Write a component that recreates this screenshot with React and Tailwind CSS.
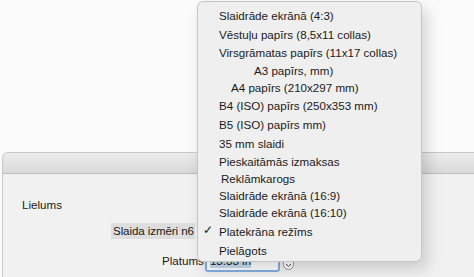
import React from 'react';

const items = [
  { label: 'Slaidrāde ekrānā (4:3)', h: 'h-[19px]', pl: 'pl-[21px]' },
  { label: 'Vēstuļu papīrs (8,5x11 collas)', h: 'h-[19px]', pl: 'pl-[21px]' },
  { label: 'Virsgrāmatas papīrs (11x17 collas)', h: 'h-[18px]', pl: 'pl-[21px]' },
  { label: 'A3 papīrs, mm)', h: 'h-[17px]', pl: 'pl-[56px]' },
  { label: 'A4 papīrs (210x297 mm)', h: 'h-[18px]', pl: 'pl-[33px]' },
  { label: 'B4 (ISO) papīrs (250x353 mm)', h: 'h-[18px]', pl: 'pl-[21px]' },
  { label: 'B5 (ISO) papīrs mm)', h: 'h-[19px]', pl: 'pl-[21px]' },
  { label: '35 mm slaidi', h: 'h-[19px]', pl: 'pl-[21px]' },
  { label: 'Pieskaitāmās izmaksas', h: 'h-[17px]', pl: 'pl-[21px]' },
  { label: 'Reklāmkarogs', h: 'h-[17px]', pl: 'pl-[23px]' },
  { label: 'Slaidrāde ekrānā (16:9)', h: 'h-[17px]', pl: 'pl-[21px]' },
  { label: 'Slaidrāde ekrānā (16:10)', h: 'h-[18px]', pl: 'pl-[21px]' },
  { label: 'Platekrāna režīms', h: 'h-[19px]', pl: 'pl-[21px]', checked: true },
  { label: 'Pielāgots', h: 'h-[19px]', pl: 'pl-[21px]' },
];

export default function App() {
  return (
    <div
      className="relative w-[474px] h-[277px] overflow-hidden bg-[#fbfbfb] text-[11.6px] text-[#1a1a1a]"
      style={{ fontFamily: '"Liberation Sans", Arial, sans-serif' }}
    >
      <div className="h-[152px]" />

      {/* Dialog */}
      <div className="ml-[2px] h-[125px] rounded-tl-[6px] border-t border-l border-[#c8c8c8] bg-[#f1f1f1] overflow-hidden">
        <div className="h-[21px] bg-gradient-to-b from-[#ececec] to-[#d9d9d9] border-b border-[#bdbdbd]" />
        <div className="pl-[19px] pt-[23px] leading-[16px]">Lielums</div>
        <div className="mt-[10px] flex items-center h-[16px]">
          <span className="ml-[108px] bg-[#dedede] pl-[2px] pr-[1px] leading-[16px] tracking-[-0.1px]">Slaida izmēri n6</span>
        </div>
        <div className="mt-[10px] flex items-center h-[23px]">
          <span className="ml-[159px] leading-[16px]">Platums</span>
          <div className="ml-[1px] w-[75px] h-[23px] rounded-[3px] border-2 border-[#84aee0] bg-white px-[3px] flex items-center">
            <span className="bg-[#c9dcf2] leading-[15px]">13.33 in</span>
          </div>
          <div className="ml-[3px] mt-[2px] w-[11px] h-[16px] rounded-full border border-[#9a9a9a] bg-white flex items-end justify-center pb-[1px]">
            <svg width="7" height="5" viewBox="0 0 7 5">
              <path d="M1 1 L3.5 3.5 L6 1" fill="none" stroke="#444" strokeWidth="1" />
            </svg>
          </div>
        </div>
      </div>

      {/* Dropdown menu */}
      <div className="absolute left-[197px] top-[1px] w-[225px] h-[261px] rounded-[6px] border border-[#c6c6c6] bg-[#efefef] pt-[4px] shadow-[5px_7px_16px_rgba(0,0,0,0.16)]">
        {items.map((it) => (
          <div key={it.label} className={`relative flex items-center ${it.h} ${it.pl} whitespace-nowrap`}>
            {it.checked && (
              <span className="absolute left-[5px] top-[-1px] text-[12px]">✓</span>
            )}
            {it.label}
          </div>
        ))}
      </div>
    </div>
  );
}
